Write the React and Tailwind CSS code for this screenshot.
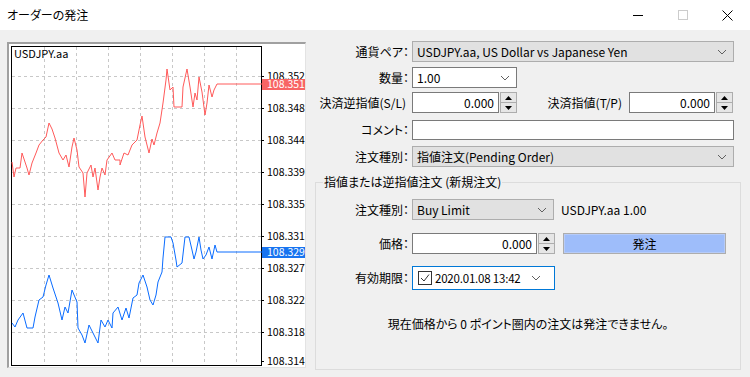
import React from "react";

const red = [[12,162],[14,177],[16,168],[20,168],[22,153],[25,162],[27,168],[29,175],[32,163],[36,153],[39,145],[43,140],[46,137],[49,123],[52,129],[55,138],[59,153],[63,160],[66,155],[69,167],[72,147],[74,138],[77,150],[79,167],[83,173],[85,197],[87,173],[91,165],[93,177],[95,168],[98,190],[100,177],[102,168],[105,175],[107,160],[112,153],[115,160],[120,160],[120,165],[124,153],[128,155],[132,145],[137,140],[140,125],[142,116],[145,137],[149,153],[152,139],[154,145],[157,133],[160,123],[163,103],[166,80],[167,69],[170,90],[173,87],[174,107],[182,107],[183,87],[187,69],[190,87],[193,107],[195,93],[197,100],[199,77],[202,92],[205,115],[207,103],[209,85],[212,97],[214,90],[217,84],[262,84]];

const blue = [[12,323],[15,327],[18,320],[23,313],[27,328],[33,328],[35,317],[39,300],[43,297],[46,285],[49,275],[53,288],[58,303],[62,320],[65,307],[68,313],[72,290],[77,302],[78,328],[82,335],[85,343],[89,325],[93,333],[98,343],[101,320],[105,327],[108,320],[112,328],[113,313],[118,307],[122,320],[126,308],[129,318],[133,298],[137,295],[139,283],[143,275],[147,287],[150,300],[153,305],[156,295],[158,282],[162,272],[163,258],[165,237],[171,237],[173,243],[176,260],[177,267],[182,263],[185,237],[189,237],[192,250],[194,259],[196,252],[199,237],[201,250],[203,259],[206,255],[209,247],[212,259],[215,245],[217,252],[262,252]];

const prices = [["108.352",76],["108.348",108],["108.344",140],["108.339",172],["108.335",204],["108.331",236],["108.327",268],["108.322",300],["108.318",332],["108.314",361]];

const pts = (a) => a.map(([x, y]) => `${x},${y}`).join(" ");

function Chevron() {
  return (
    <svg width="10" height="6" viewBox="0 0 10 6" className="shrink-0">
      <path d="M1 1 L5 5 L9 1" fill="none" stroke="#606060" strokeWidth="1" />
    </svg>
  );
}

function Spinner() {
  return (
    <div className="w-[17px] ml-[1px] border border-[#adadad] bg-[#e6e6e6] flex flex-col">
      <div className="flex-1 flex items-center justify-center border-b border-[#adadad]">
        <svg width="7" height="4" viewBox="0 0 7 4"><path d="M0 4 L3.5 0 L7 4 Z" fill="#000" /></svg>
      </div>
      <div className="flex-1 flex items-center justify-center">
        <svg width="7" height="4" viewBox="0 0 7 4"><path d="M0 0 L3.5 4 L7 0 Z" fill="#000" /></svg>
      </div>
    </div>
  );
}

function NumInput({ w }) {
  return (
    <div className="flex h-[21px]">
      <div className={`${w} border border-[#7a7a7a] bg-white flex items-center justify-end pr-[4px]`}>0.000</div>
      <Spinner />
    </div>
  );
}

function Select({ w, gray, children }) {
  return (
    <div className={`${w} h-[21px] border flex items-center pl-[4px] pr-[6px] ${gray ? "bg-[#e1e1e1] border-[#adadad]" : "bg-white border-[#7a7a7a]"}`}>
      <span className="flex-1">{children}</span>
      <Chevron />
    </div>
  );
}

function Label({ w = "w-[97px]", children }) {
  return <div className={`${w} text-right pr-[3px] shrink-0`}>{children}</div>;
}

function Chart() {
  return (
    <div className="mt-[12px] ml-[7px] w-[299px] h-[326px] border-t-2 border-l-2 border-[#a0a0a0] border-r border-b border-r-[#e3e3e3] border-b-[#e3e3e3] bg-white">
      <svg width="296" height="323" viewBox="9 44 296 323" className="block overflow-visible">
        {[76, 108, 140, 172, 204, 236, 268, 300, 332].map((y) => (
          <line key={y} x1="12" x2="261" y1={y + 0.5} y2={y + 0.5} stroke="#c8c8c8" strokeDasharray="3 3" />
        ))}
        {[44, 76, 108, 140, 172, 204, 236].map((x) => (
          <line key={x} y1="47" y2="365" x1={x + 0.5} x2={x + 0.5} stroke="#c8c8c8" strokeDasharray="3 3" />
        ))}
        <rect x="11.5" y="46.5" width="250" height="319" fill="none" stroke="#000" />
        <polyline points={pts(red)} fill="none" stroke="#ff5a5a" strokeWidth="1" />
        <polyline points={pts(blue)} fill="none" stroke="#0a6cff" strokeWidth="1" />
        <text x="14" y="58" fontSize="11" fill="#000">USDJPY.aa</text>
        {prices.map(([p, y]) => (
          <g key={p}>
            <line x1="262" x2="264" y1={y + 0.5} y2={y + 0.5} stroke="#000" />
            <text x="267" y={y + 3.5} fontSize="10.5" fill="#000">{p}</text>
          </g>
        ))}
        <rect x="262" y="79" width="43" height="11" fill="#f86464" />
        <text x="267" y="88" fontSize="10.5" fill="#fff">108.351</text>
        <rect x="262" y="247" width="43" height="11" fill="#1874f0" />
        <text x="267" y="256" fontSize="10.5" fill="#fff">108.329</text>
      </svg>
    </div>
  );
}

export default function App() {
  return (
    <div className="w-[750px] h-[377px] bg-[#f0f0f0] flex flex-col overflow-hidden text-[12px] leading-[16px] text-black [font-family:'Noto_Sans_CJK_JP',sans-serif] [font-feature-settings:'palt']">
      <div className="h-[30px] bg-white flex items-center shrink-0">
        <span className="pl-[7px]">オーダーの発注</span>
        <div className="ml-auto flex h-full">
          <div className="w-[45px] flex items-center justify-center">
            <div className="w-[10px] h-px bg-black" />
          </div>
          <div className="w-[45px] flex items-center justify-center">
            <div className="w-[10px] h-[10px] border border-[#cccccc]" />
          </div>
          <div className="w-[45px] flex items-center justify-center">
            <svg width="11" height="11" viewBox="0 0 11 11">
              <path d="M0.5 0.5 L10.5 10.5 M10.5 0.5 L0.5 10.5" stroke="#000" strokeWidth="1" />
            </svg>
          </div>
        </div>
      </div>

      <div className="flex">
        <Chart />

        <div className="ml-[9px] w-[426px] flex flex-col">
          <div className="flex items-center mt-[11px]">
            <Label>通貨ペア：</Label>
            <Select w="w-[322px]" gray>USDJPY.aa, US Dollar vs Japanese Yen</Select>
          </div>
          <div className="flex items-center mt-[5px]">
            <Label>数量：</Label>
            <Select w="w-[105px]">1.00</Select>
          </div>
          <div className="flex items-center mt-[4px]">
            <Label w="w-[97px]"><span className="pr-[3px]">決済逆指値(S/L)</span></Label>
            <NumInput w="w-[87px]" />
            <div className="w-[112px] text-right pr-[7px]">決済指値(T/P)</div>
            <NumInput w="w-[86px]" />
          </div>
          <div className="flex items-center mt-[7px]">
            <Label>コメント：</Label>
            <div className="w-[322px] h-[20px] border border-[#7a7a7a] bg-white" />
          </div>
          <div className="flex items-center mt-[6px]">
            <Label>注文種別：</Label>
            <Select w="w-[322px]" gray>指値注文(Pending Order)</Select>
          </div>

          <fieldset className="mt-[7px] border border-[#dcdcdc] pb-[37px]">
            <legend className="ml-[7px] px-[1px]">指値または逆指値注文 (新規注文)</legend>
            <div className="flex items-center mt-[9px]">
              <Label w="w-[96px]">注文種別：</Label>
              <Select w="w-[142px]" gray>Buy Limit</Select>
              <span className="ml-[7px]">USDJPY.aa 1.00</span>
            </div>
            <div className="flex items-center mt-[13px]">
              <Label w="w-[96px]">価格：</Label>
              <NumInput w="w-[125px]" />
              <div className="ml-[8px] w-[163px] h-[21px] border border-[#adadad] bg-[#9ebdfa] shadow-[inset_0_0_0_1px_#b6cbf8] flex items-center justify-center">発注</div>
            </div>
            <div className="flex items-center mt-[12px]">
              <Label w="w-[96px]">有効期限：</Label>
              <div className="w-[143px] h-[24px] border border-[#0078d7] bg-white flex items-center pl-[5px] pr-[13px]">
                <svg width="14" height="14" viewBox="0 0 14 14" className="shrink-0">
                  <rect x="0.5" y="0.5" width="13" height="13" fill="#fff" stroke="#333" />
                  <path d="M3 7 L6 10 L11 3.5" fill="none" stroke="#333" strokeWidth="1" />
                </svg>
                <span className="ml-[3px] flex-1 text-[11.5px] tracking-[-0.2px] whitespace-nowrap">2020.01.08 13:42</span>
                <Chevron />
              </div>
            </div>
            <div className="mt-[26px] text-center">現在価格から 0 ポイント圏内の注文は発注できません。</div>
          </fieldset>
        </div>
      </div>
    </div>
  );
}
